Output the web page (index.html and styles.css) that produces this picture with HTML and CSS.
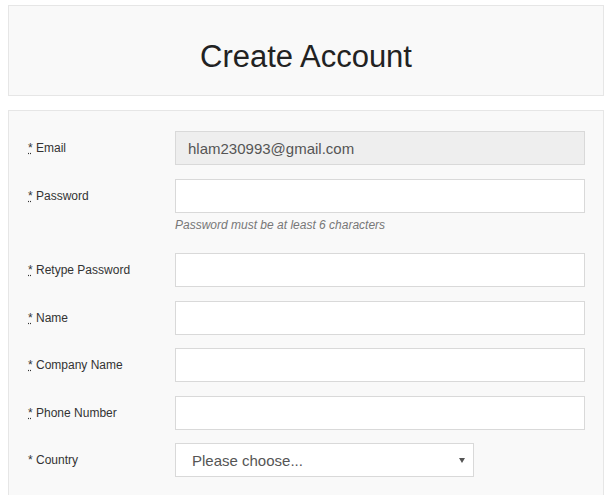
FILE: index.html
```html
<!DOCTYPE html>
<html>

<head>
    <meta name="viewport" content="width=device-width, initial-scale=1" />
    <link rel="stylesheet" href="styles.css">
</head>

<body>
    <header class="title-box">
        <h1>Create Account</h1>
    </header>
    <form class="form-box">
        <div class="row">
            <label class="lbl" for="email"><abbr title="required">*</abbr> Email</label>
            <input id="email" type="text" value="hlam230993@gmail.com" disabled>
        </div>
        <div class="row">
            <label class="lbl" for="password"><abbr title="required">*</abbr> Password</label>
            <div class="field">
                <input id="password" type="password">
                <span class="help">Password must be at least 6 characters</span>
            </div>
        </div>
        <div class="row">
            <label class="lbl" for="retype"><abbr title="required">*</abbr> Retype Password</label>
            <input id="retype" type="password">
        </div>
        <div class="row">
            <label class="lbl" for="name"><abbr title="required">*</abbr> Name</label>
            <input id="name" type="text">
        </div>
        <div class="row">
            <label class="lbl" for="company"><abbr title="required">*</abbr> Company Name</label>
            <input id="company" type="text">
        </div>
        <div class="row">
            <label class="lbl" for="phone"><abbr title="required">*</abbr> Phone Number</label>
            <input id="phone" type="text">
        </div>
        <div class="row">
            <label class="lbl" for="country">* Country</label>
            <div class="select-wrap">
                <select id="country">
                    <option>Please choose...</option>
                </select>
            </div>
        </div>
    </form>
</body>

</html>
```

FILE: styles.css
```css
body {
    font-family: "Liberation Sans", Arial, Helvetica, sans-serif;
    color: #333;
    background-color: #fff;
    margin: 5px 8px 0;
    overflow: hidden;
}

.title-box {
    height: 77px;
    padding-top: 12px;
    display: flex;
    align-items: center;
    justify-content: center;
    background-color: #f9f9f9;
    border: 1px solid #e6e6e6;
}

.title-box h1 {
    margin: 0;
    font-size: 31px;
    font-weight: normal;
    color: #222;
}

.form-box {
    margin-top: 14px;
    padding: 20px 18px 30px 19px;
    background-color: #f9f9f9;
    border: 1px solid #e6e6e6;
    display: flex;
    flex-direction: column;
    gap: 13.5px;
}

.row {
    display: flex;
    align-items: flex-start;
}

.lbl {
    width: 147px;
    flex: none;
    font-size: 12px;
    line-height: 17px;
    padding-top: 9px;
}

abbr {
    text-decoration: underline dotted;
    cursor: help;
}

.field {
    flex: 1;
    display: flex;
    flex-direction: column;
}

input,
select {
    box-sizing: border-box;
    height: 34px;
    font-family: inherit;
    font-size: 15px;
    color: #555;
    background-color: #fff;
    border: 1px solid #d9d9d9;
    border-radius: 0;
    padding: 0 12px;
    outline: none;
}

.row > input {
    flex: 1;
}

input:disabled {
    background-color: #eee;
    color: #555;
}

.help {
    font-size: 12px;
    font-style: italic;
    color: #777;
    line-height: 16px;
    margin: 4px 0 7px;
}

.select-wrap {
    position: relative;
    width: 299px;
}

.select-wrap select {
    width: 100%;
    padding-left: 16px;
    -webkit-appearance: none;
    appearance: none;
}

/* small arrow on the right of the select */
.select-wrap::after {
    content: "";
    position: absolute;
    right: 9px;
    top: 15px;
    border-left: 3px solid transparent;
    border-right: 3px solid transparent;
    border-top: 5px solid #555;
    pointer-events: none;
}
```
